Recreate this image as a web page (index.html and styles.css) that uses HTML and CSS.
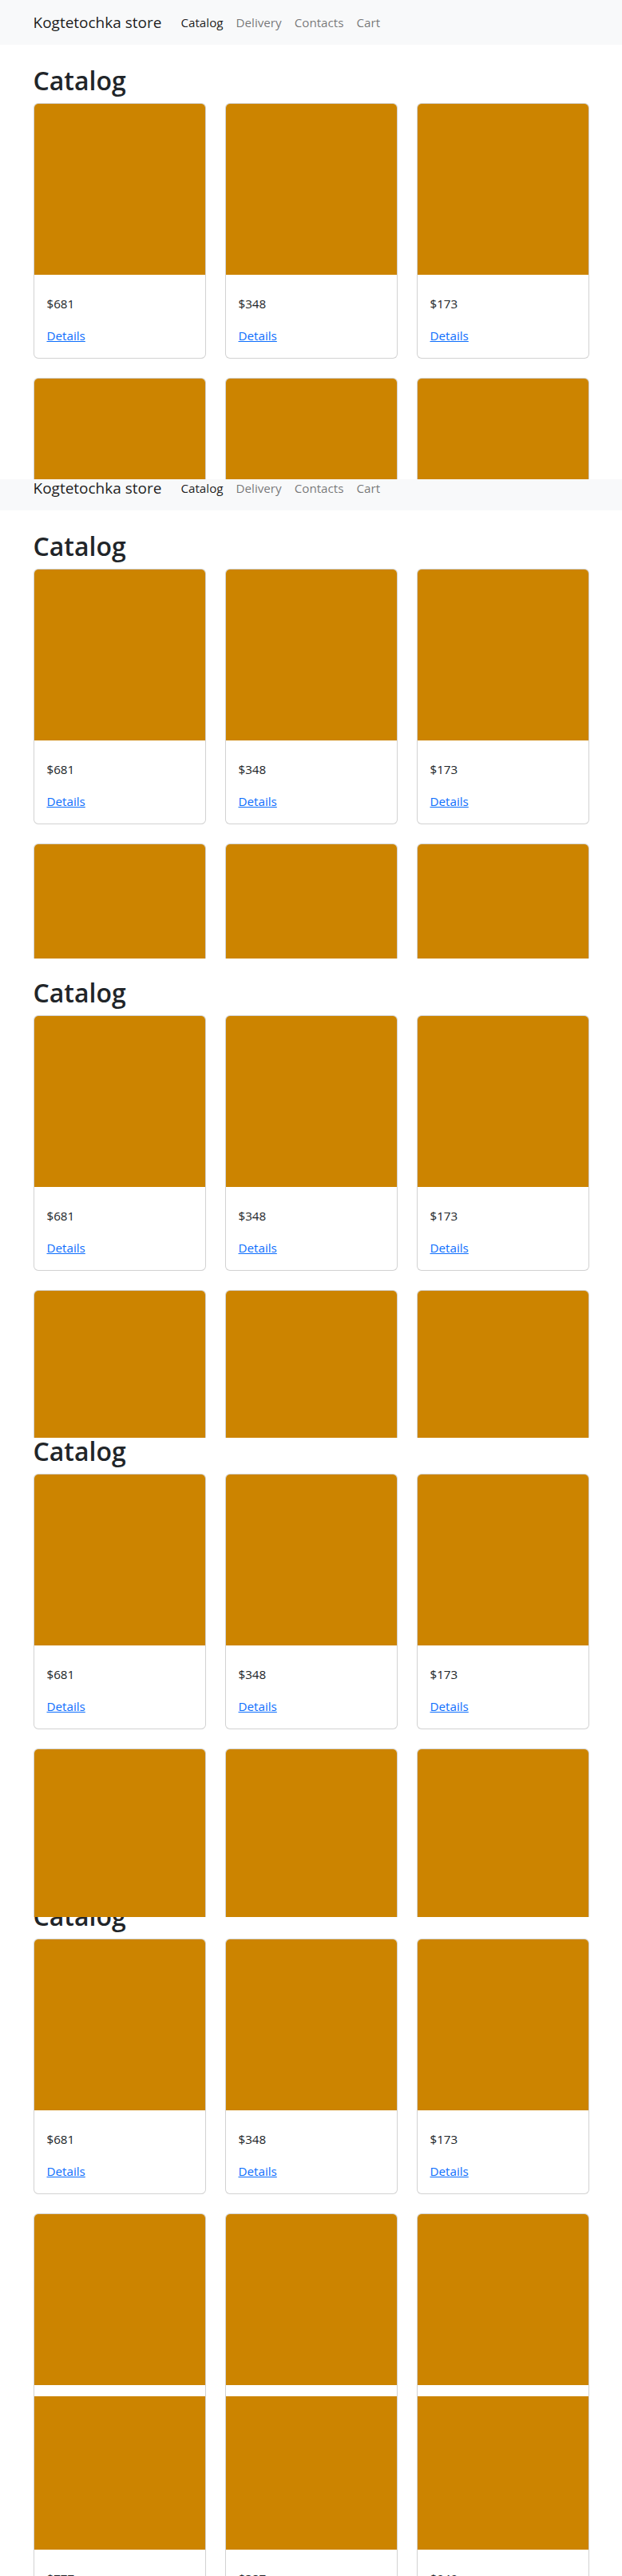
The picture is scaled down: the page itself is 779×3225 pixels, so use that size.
FILE: index.html
```html
<!DOCTYPE html>
<html lang="en">
<head>
<meta charset="utf-8">
<title>Kogtetochka store</title>
<link rel="stylesheet" href="styles.css">
</head>
<body>
<div class="shot">

  <div class="slice s1">
    <div class="page">
      <nav class="navbar"><div class="container nav-inner"><a class="brand" href="#">Kogtetochka store</a><a class="nav-link active" href="#">Catalog</a><a class="nav-link" href="#">Delivery</a><a class="nav-link" href="#">Contacts</a><a class="nav-link" href="#">Cart</a></div></nav>
      <main class="container main">
        <h1 class="title">Catalog</h1>
        <div class="grid">
          <div class="card"><div class="card-img"></div><div class="card-body"><h5 class="card-title"></h5><p class="price">$681</p><a class="details" href="#">Details</a></div></div>
          <div class="card"><div class="card-img"></div><div class="card-body"><h5 class="card-title"></h5><p class="price">$348</p><a class="details" href="#">Details</a></div></div>
          <div class="card"><div class="card-img"></div><div class="card-body"><h5 class="card-title"></h5><p class="price">$173</p><a class="details" href="#">Details</a></div></div>
          <div class="card"><div class="card-img"></div><div class="card-body"><h5 class="card-title"></h5><p class="price">$777</p><a class="details" href="#">Details</a></div></div>
          <div class="card"><div class="card-img"></div><div class="card-body"><h5 class="card-title"></h5><p class="price">$387</p><a class="details" href="#">Details</a></div></div>
          <div class="card"><div class="card-img"></div><div class="card-body"><h5 class="card-title"></h5><p class="price">$949</p><a class="details" href="#">Details</a></div></div>
        </div>
      </main>
    </div>
  </div>

  <div class="slice s2">
    <div class="page">
      <nav class="navbar"><div class="container nav-inner"><a class="brand" href="#">Kogtetochka store</a><a class="nav-link active" href="#">Catalog</a><a class="nav-link" href="#">Delivery</a><a class="nav-link" href="#">Contacts</a><a class="nav-link" href="#">Cart</a></div></nav>
      <main class="container main">
        <h1 class="title">Catalog</h1>
        <div class="grid">
          <div class="card"><div class="card-img"></div><div class="card-body"><h5 class="card-title"></h5><p class="price">$681</p><a class="details" href="#">Details</a></div></div>
          <div class="card"><div class="card-img"></div><div class="card-body"><h5 class="card-title"></h5><p class="price">$348</p><a class="details" href="#">Details</a></div></div>
          <div class="card"><div class="card-img"></div><div class="card-body"><h5 class="card-title"></h5><p class="price">$173</p><a class="details" href="#">Details</a></div></div>
          <div class="card"><div class="card-img"></div><div class="card-body"><h5 class="card-title"></h5><p class="price">$777</p><a class="details" href="#">Details</a></div></div>
          <div class="card"><div class="card-img"></div><div class="card-body"><h5 class="card-title"></h5><p class="price">$387</p><a class="details" href="#">Details</a></div></div>
          <div class="card"><div class="card-img"></div><div class="card-body"><h5 class="card-title"></h5><p class="price">$949</p><a class="details" href="#">Details</a></div></div>
        </div>
      </main>
    </div>
  </div>

  <div class="slice s3">
    <div class="page">
      <nav class="navbar"><div class="container nav-inner"><a class="brand" href="#">Kogtetochka store</a><a class="nav-link active" href="#">Catalog</a><a class="nav-link" href="#">Delivery</a><a class="nav-link" href="#">Contacts</a><a class="nav-link" href="#">Cart</a></div></nav>
      <main class="container main">
        <h1 class="title">Catalog</h1>
        <div class="grid">
          <div class="card"><div class="card-img"></div><div class="card-body"><h5 class="card-title"></h5><p class="price">$681</p><a class="details" href="#">Details</a></div></div>
          <div class="card"><div class="card-img"></div><div class="card-body"><h5 class="card-title"></h5><p class="price">$348</p><a class="details" href="#">Details</a></div></div>
          <div class="card"><div class="card-img"></div><div class="card-body"><h5 class="card-title"></h5><p class="price">$173</p><a class="details" href="#">Details</a></div></div>
          <div class="card"><div class="card-img"></div><div class="card-body"><h5 class="card-title"></h5><p class="price">$777</p><a class="details" href="#">Details</a></div></div>
          <div class="card"><div class="card-img"></div><div class="card-body"><h5 class="card-title"></h5><p class="price">$387</p><a class="details" href="#">Details</a></div></div>
          <div class="card"><div class="card-img"></div><div class="card-body"><h5 class="card-title"></h5><p class="price">$949</p><a class="details" href="#">Details</a></div></div>
        </div>
      </main>
    </div>
  </div>

  <div class="slice s4">
    <div class="page">
      <nav class="navbar"><div class="container nav-inner"><a class="brand" href="#">Kogtetochka store</a><a class="nav-link active" href="#">Catalog</a><a class="nav-link" href="#">Delivery</a><a class="nav-link" href="#">Contacts</a><a class="nav-link" href="#">Cart</a></div></nav>
      <main class="container main">
        <h1 class="title">Catalog</h1>
        <div class="grid">
          <div class="card"><div class="card-img"></div><div class="card-body"><h5 class="card-title"></h5><p class="price">$681</p><a class="details" href="#">Details</a></div></div>
          <div class="card"><div class="card-img"></div><div class="card-body"><h5 class="card-title"></h5><p class="price">$348</p><a class="details" href="#">Details</a></div></div>
          <div class="card"><div class="card-img"></div><div class="card-body"><h5 class="card-title"></h5><p class="price">$173</p><a class="details" href="#">Details</a></div></div>
          <div class="card"><div class="card-img"></div><div class="card-body"><h5 class="card-title"></h5><p class="price">$777</p><a class="details" href="#">Details</a></div></div>
          <div class="card"><div class="card-img"></div><div class="card-body"><h5 class="card-title"></h5><p class="price">$387</p><a class="details" href="#">Details</a></div></div>
          <div class="card"><div class="card-img"></div><div class="card-body"><h5 class="card-title"></h5><p class="price">$949</p><a class="details" href="#">Details</a></div></div>
        </div>
      </main>
    </div>
  </div>

  <div class="slice s5">
    <div class="page">
      <nav class="navbar"><div class="container nav-inner"><a class="brand" href="#">Kogtetochka store</a><a class="nav-link active" href="#">Catalog</a><a class="nav-link" href="#">Delivery</a><a class="nav-link" href="#">Contacts</a><a class="nav-link" href="#">Cart</a></div></nav>
      <main class="container main">
        <h1 class="title">Catalog</h1>
        <div class="grid">
          <div class="card"><div class="card-img"></div><div class="card-body"><h5 class="card-title"></h5><p class="price">$681</p><a class="details" href="#">Details</a></div></div>
          <div class="card"><div class="card-img"></div><div class="card-body"><h5 class="card-title"></h5><p class="price">$348</p><a class="details" href="#">Details</a></div></div>
          <div class="card"><div class="card-img"></div><div class="card-body"><h5 class="card-title"></h5><p class="price">$173</p><a class="details" href="#">Details</a></div></div>
          <div class="card"><div class="card-img"></div><div class="card-body"><h5 class="card-title"></h5><p class="price">$777</p><a class="details" href="#">Details</a></div></div>
          <div class="card"><div class="card-img"></div><div class="card-body"><h5 class="card-title"></h5><p class="price">$387</p><a class="details" href="#">Details</a></div></div>
          <div class="card"><div class="card-img"></div><div class="card-body"><h5 class="card-title"></h5><p class="price">$949</p><a class="details" href="#">Details</a></div></div>
        </div>
      </main>
    </div>
  </div>

  <div class="slice s6">
    <div class="page">
      <nav class="navbar"><div class="container nav-inner"><a class="brand" href="#">Kogtetochka store</a><a class="nav-link active" href="#">Catalog</a><a class="nav-link" href="#">Delivery</a><a class="nav-link" href="#">Contacts</a><a class="nav-link" href="#">Cart</a></div></nav>
      <main class="container main">
        <h1 class="title">Catalog</h1>
        <div class="grid">
          <div class="card"><div class="card-img"></div><div class="card-body"><h5 class="card-title"></h5><p class="price">$681</p><a class="details" href="#">Details</a></div></div>
          <div class="card"><div class="card-img"></div><div class="card-body"><h5 class="card-title"></h5><p class="price">$348</p><a class="details" href="#">Details</a></div></div>
          <div class="card"><div class="card-img"></div><div class="card-body"><h5 class="card-title"></h5><p class="price">$173</p><a class="details" href="#">Details</a></div></div>
          <div class="card"><div class="card-img"></div><div class="card-body"><h5 class="card-title"></h5><p class="price">$777</p><a class="details" href="#">Details</a></div></div>
          <div class="card"><div class="card-img"></div><div class="card-body"><h5 class="card-title"></h5><p class="price">$387</p><a class="details" href="#">Details</a></div></div>
          <div class="card"><div class="card-img"></div><div class="card-body"><h5 class="card-title"></h5><p class="price">$949</p><a class="details" href="#">Details</a></div></div>
        </div>
      </main>
    </div>
  </div>

</div>
</body>
</html>
```

FILE: styles.css
```css
* { box-sizing: border-box; }

html, body {
  margin: 0;
  padding: 0;
  background: #fff;
}

body {
  font-family: "Open Sans", "Noto Sans", "Liberation Sans", sans-serif;
  font-size: 15.2px;
  line-height: 24px;
  color: #212529;
  width: 779px;
}

.shot {
  display: flex;
  flex-direction: column;
}

.slice {
  height: 600px;
  overflow: hidden;
  flex: none;
  background: #fff;
}

.s6 { height: 225px; }

.s1 .page { margin-top: 0; }
.s2 .page { margin-top: -17.5px; }
.s3 .page { margin-top: -58.3px; }
.s4 .page { margin-top: -84.3px; }
.s5 .page { margin-top: -102.3px; }
.s6 .page { margin-top: -496.3px; }

.container {
  width: 100%;
  max-width: 720px;
  margin: 0 auto;
  padding: 0 12px;
}

.navbar {
  background: #f8f9fa;
  padding: 8px 0;
}

.nav-inner {
  display: flex;
  align-items: center;
}

.brand {
  font-size: 19px;
  line-height: 30px;
  padding: 5px 0;
  margin-right: 16px;
  color: rgba(0, 0, 0, 0.9);
  text-decoration: none;
}

.nav-link {
  font-size: 15.2px;
  line-height: 24px;
  padding: 8px;
  color: rgba(0, 0, 0, 0.55);
  text-decoration: none;
}

.nav-link.active {
  color: rgba(0, 0, 0, 0.9);
}

.main {
  padding-top: 24px;
}

.title {
  font-size: 32px;
  font-weight: 600;
  line-height: 40px;
  margin: 0 0 9px;
  padding-top: 1px;
  height: 40px;
  color: #212529;
}

.grid {
  display: grid;
  grid-template-columns: repeat(3, 1fr);
  gap: 24px;
}

.card {
  background: #fff;
  border: 1px solid rgba(0, 0, 0, 0.175);
  border-radius: 6px;
  display: flex;
  flex-direction: column;
}

.card-img {
  aspect-ratio: 1 / 1;
  background: #cc8400;
  border-radius: 5px 5px 0 0;
}

.card-body {
  padding: 16px;
}

.card-title {
  margin: 0 0 8px;
  font-size: 20px;
  line-height: 0;
  height: 0;
}

.price {
  margin: 0 0 16px;
}

.details {
  color: #0d6efd;
  text-decoration: underline;
}
```
